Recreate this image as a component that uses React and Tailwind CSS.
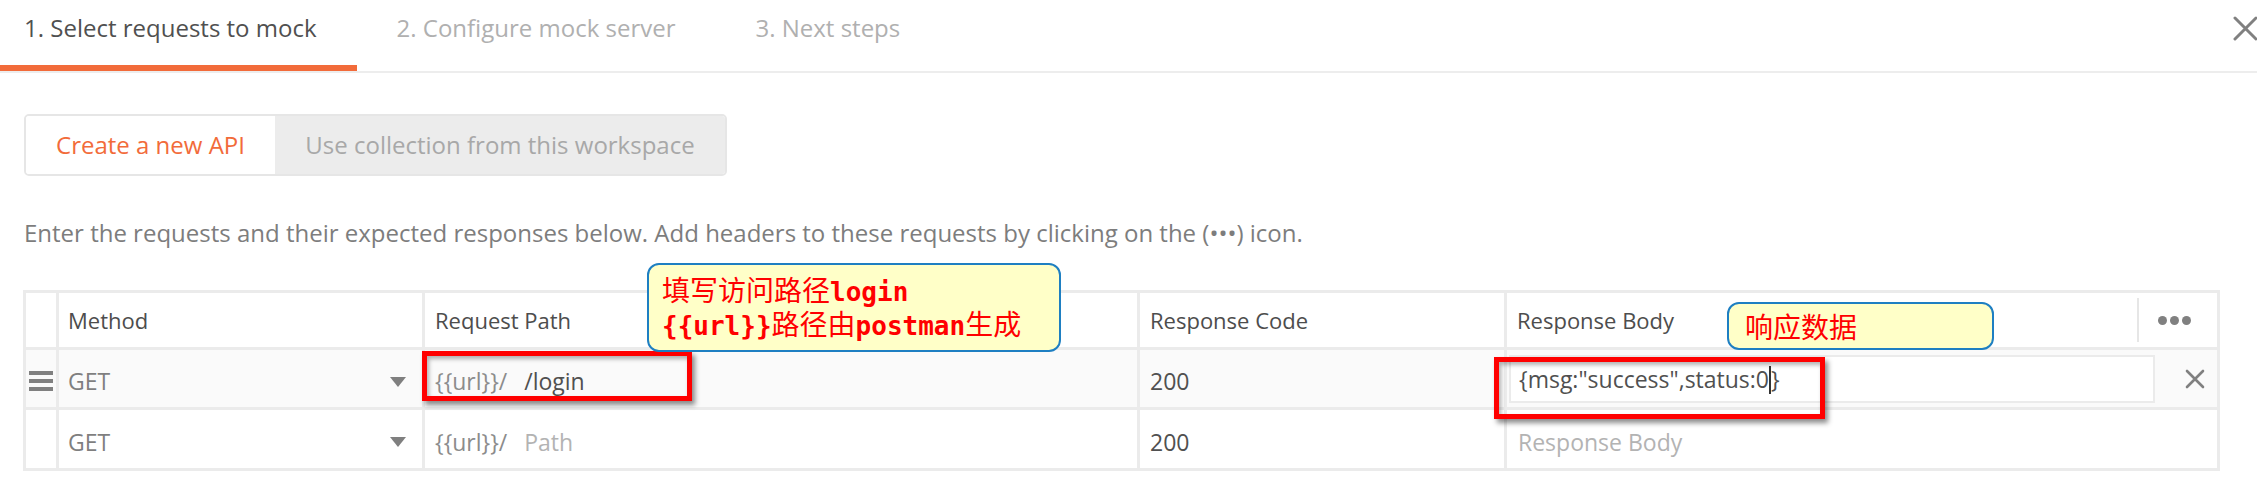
export default function App() {
  const mono = "font-['DejaVu_Sans_Mono',monospace] font-bold text-[26px]";
  return (
    <div className="relative w-[2257px] h-[485px] overflow-hidden bg-white font-['Open_Sans',sans-serif]">
      {/* Tabs */}
      <div className="flex items-start h-[73px] border-b-2 border-[#ededed]">
        <div className="h-[71px] pl-[24px] pr-[40px] pt-[12px] border-b-[6px] border-[#f26b3a] text-[24px] leading-[32px] text-[#505050] whitespace-nowrap">
          1. Select requests to mock
        </div>
        <div className="h-[71px] px-[40px] pt-[12px] text-[24px] leading-[32px] text-[#b0b0b0] whitespace-nowrap">
          2. Configure mock server
        </div>
        <div className="h-[71px] px-[40px] pt-[12px] text-[24px] leading-[32px] text-[#b0b0b0] whitespace-nowrap">
          3. Next steps
        </div>
        <div className="ml-auto mt-[16px] w-[24px] h-[25px]">
          <svg width="24" height="25" viewBox="0 0 24 25">
            <path d="M2 2 L23 23 M23 2 L2 23" stroke="#808080" strokeWidth="3" strokeLinecap="round" />
          </svg>
        </div>
      </div>

      {/* Toggle */}
      <div className="ml-[24px] mt-[41px] flex w-[703px] h-[62px] border-2 border-[#e6e6e6] rounded-[5px] overflow-hidden">
        <div className="w-[249px] flex items-center justify-center bg-white text-[24px] text-[#f26b3a] whitespace-nowrap">
          Create a new API
        </div>
        <div className="flex-1 flex items-center justify-center bg-[#ececec] text-[24px] text-[#a8a8a8] whitespace-nowrap">
          Use collection from this workspace
        </div>
      </div>

      {/* Description */}
      <div className="ml-[24px] mt-[41px] text-[24px] leading-[32px] text-[#7d7d7d] whitespace-nowrap">
        Enter the requests and their expected responses below. Add headers to these requests by clicking on the (•••) icon.
      </div>

      {/* Table */}
      <div className="ml-[23px] mt-[41px] w-[2197px] border-[3px] border-[#ebebeb]">
        {/* Header */}
        <div className="flex h-[57px] border-b-[3px] border-[#ebebeb] text-[22px] font-medium text-[#4d4d4d]">
          <div className="w-[30px]" />
          <div className="w-[366px] border-l-[3px] border-[#ebebeb] pl-[9px] flex items-center">Method</div>
          <div className="w-[715px] border-l-[3px] border-[#ebebeb] pl-[10px] flex items-center">Request Path</div>
          <div className="w-[367px] border-l-[3px] border-[#ebebeb] pl-[10px] flex items-center">Response Code</div>
          <div className="w-[713px] border-l-[3px] border-[#ebebeb] pl-[10px] flex items-center">
            <span>Response Body</span>
            <div className="ml-auto w-[80px] h-full flex items-center">
              <div className="w-[2px] h-[44px] bg-[#e6e6e6]" />
              <div className="flex-1 flex items-center justify-center gap-[3px] pr-[8px]">
                <span className="w-[9px] h-[9px] rounded-full bg-[#808080]" />
                <span className="w-[9px] h-[9px] rounded-full bg-[#808080]" />
                <span className="w-[9px] h-[9px] rounded-full bg-[#808080]" />
              </div>
            </div>
          </div>
        </div>

        {/* Row 1 */}
        <div className="flex h-[60px] border-b-[3px] border-[#ebebeb] bg-[#fafafa] text-[23px]">
          <div className="w-[30px] flex flex-col items-center justify-center gap-[4px] pt-[4px]">
            <span className="block w-[24px] h-[4px] bg-[#808080]" />
            <span className="block w-[24px] h-[4px] bg-[#808080]" />
            <span className="block w-[24px] h-[4px] bg-[#808080]" />
          </div>
          <div className="w-[366px] border-l-[3px] border-[#ebebeb] pl-[9px] pr-[16px] pt-[6px] flex items-center text-[#7f7f7f]">
            <span>GET</span>
            <svg className="ml-auto" width="16" height="10" viewBox="0 0 16 10">
              <path d="M0 0 L16 0 L8 10 Z" fill="#7f7f7f" />
            </svg>
          </div>
          <div className="w-[715px] border-l-[3px] border-[#ebebeb] pl-[10px] pt-[6px] flex items-center">
            <span className="text-[#8c8c8c]">{"{{url}}/"}</span>
            <span className="ml-[17px] text-[#505050]">/login</span>
          </div>
          <div className="w-[367px] border-l-[3px] border-[#ebebeb] pl-[10px] pt-[6px] flex items-center text-[#505050]">200</div>
          <div className="w-[713px] border-l-[3px] border-[#ebebeb] pl-[2px] flex items-center">
            <div className="w-[646px] h-[48px] border-2 border-[#ebebeb] bg-white pl-[8px] pt-[2px] flex items-center text-[#505050] whitespace-nowrap">
              <span>{'{msg:"success",status:0'}</span>
              <span className="inline-block w-[2px] h-[28px] bg-[#333333]" />
              <span>{"}"}</span>
            </div>
            <div className="ml-[30px] w-[20px] h-[20px]">
              <svg width="20" height="20" viewBox="0 0 20 20">
                <path d="M2 2 L18 18 M18 2 L2 18" stroke="#808080" strokeWidth="2.6" strokeLinecap="round" />
              </svg>
            </div>
          </div>
        </div>

        {/* Row 2 */}
        <div className="flex h-[58px] text-[23px]">
          <div className="w-[30px]" />
          <div className="w-[366px] border-l-[3px] border-[#ebebeb] pl-[9px] pr-[16px] pt-[6px] flex items-center text-[#7f7f7f]">
            <span>GET</span>
            <svg className="ml-auto" width="16" height="10" viewBox="0 0 16 10">
              <path d="M0 0 L16 0 L8 10 Z" fill="#7f7f7f" />
            </svg>
          </div>
          <div className="w-[715px] border-l-[3px] border-[#ebebeb] pl-[10px] pt-[6px] flex items-center">
            <span className="text-[#8c8c8c]">{"{{url}}/"}</span>
            <span className="ml-[17px] text-[#b3b3b3]">Path</span>
          </div>
          <div className="w-[367px] border-l-[3px] border-[#ebebeb] pl-[10px] pt-[6px] flex items-center text-[#505050]">200</div>
          <div className="w-[713px] border-l-[3px] border-[#ebebeb] pl-[11px] pt-[6px] flex items-center text-[#b3b3b3]">Response Body</div>
        </div>
      </div>

      {/* Annotations */}
      <div className="absolute left-[422px] top-[351px] w-[270px] h-[50px] border-[5px] border-[#ff0000] shadow-[3px_4px_5px_rgba(0,0,0,0.45),inset_2px_3px_4px_rgba(0,0,0,0.3)]" />
      <div className="absolute left-[1494px] top-[357px] w-[331px] h-[62px] border-[5px] border-[#ff0000] shadow-[3px_4px_5px_rgba(0,0,0,0.45),inset_2px_3px_4px_rgba(0,0,0,0.3)]" />

      <div className="absolute left-[647px] top-[263px] w-[414px] h-[89px] rounded-[12px] border-2 border-[#1e7fc2] bg-[#ffffc8] pl-[13px] pt-[9px] text-[28px] leading-[31px] text-[#ff0000] font-['Noto_Sans_CJK_SC',sans-serif] whitespace-nowrap">
        <div>填写访问路径<span className={mono}>login</span></div>
        <div><span className={mono}>{"{{url}}"}</span>路径由<span className={mono}>postman</span>生成</div>
      </div>

      <div className="absolute left-[1727px] top-[302px] w-[267px] h-[48px] rounded-[12px] border-2 border-[#1e7fc2] bg-[#ffffc8] pl-[16px] flex items-center text-[28px] text-[#ff0000] font-['Noto_Sans_CJK_SC',sans-serif]">
        响应数据
      </div>
    </div>
  );
}
